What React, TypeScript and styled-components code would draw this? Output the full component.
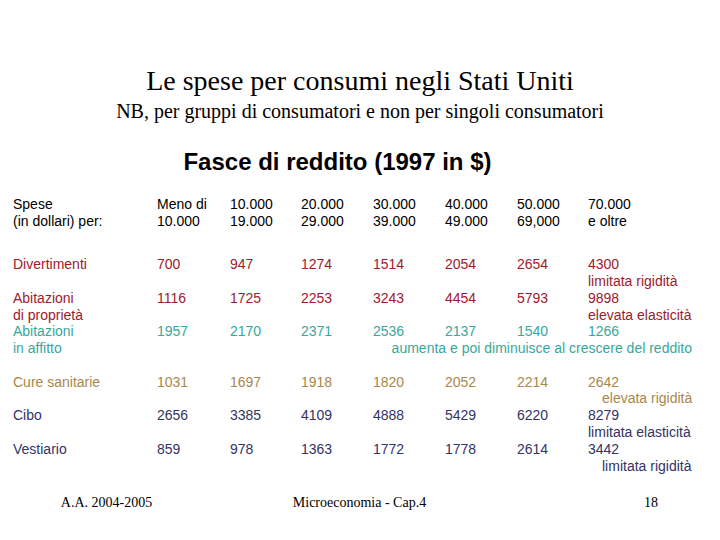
import React from "react";
import styled, { createGlobalStyle } from "styled-components";

const Global = createGlobalStyle`
  html, body { margin: 0; padding: 0; background: #ffffff; }
  body { width: 720px; height: 540px; overflow: hidden; }
`;

const Page = styled.div`
  width: 720px;
  height: 540px;
  display: flex;
  flex-direction: column;
  background: #ffffff;
  color: #000000;
`;

const Title = styled.h1`
  margin: 65px 0 0 0;
  font-family: "Liberation Serif", "Times New Roman", serif;
  font-weight: normal;
  font-size: 28px;
  line-height: 31px;
  text-align: center;
`;

const Subtitle = styled.h2`
  margin: 3px 0 0 0;
  font-family: "Liberation Serif", "Times New Roman", serif;
  font-weight: normal;
  font-size: 20px;
  line-height: 24px;
  text-align: center;
`;

const Heading = styled.h3`
  margin: 25px 45px 0 0;
  font-family: "Liberation Sans", Arial, sans-serif;
  font-weight: bold;
  font-size: 24px;
  line-height: 28px;
  text-align: center;
`;

const Table = styled.div`
  margin-top: 20px;
  padding-left: 13px;
  display: flex;
  flex-direction: column;
  font-family: "Liberation Sans", Arial, sans-serif;
  font-size: 14px;
  line-height: 16.8px;
`;

const Row = styled.div<{ $color: string; $gap: number }>`
  display: grid;
  grid-template-columns: 144px 73px 71px 72px 72px 72px 71px 104px;
  grid-template-rows: repeat(2, 16.8px);
  margin-top: ${(p) => p.$gap}px;
  color: ${(p) => p.$color};
  white-space: nowrap;
`;

const Label = styled.div`
  grid-row: span 2;
`;

const Cell = styled.div``;

const Note = styled.div<{ $indent: number }>`
  grid-column: 8;
  padding-left: ${(p) => p.$indent}px;
`;

const WideNote = styled.div`
  grid-column: 4 / span 5;
  text-align: right;
`;

const Footer = styled.div`
  margin-top: 20px;
  display: grid;
  grid-template-columns: 213px 293px 1fr;
  font-family: "Liberation Serif", "Times New Roman", serif;
  font-size: 14px;
  line-height: 17px;
`;

const FootItem = styled.div<{ $align: string; $pad?: number }>`
  text-align: ${(p) => p.$align};
  padding-right: ${(p) => p.$pad ?? 0}px;
`;

const RED = "#9e1a2c";
const TEAL = "#37a89a";
const GOLD = "#a8874b";
const NAVY = "#333366";

type Rec = {
  label: string[];
  values: string[];
  color: string;
  gap: number;
  note?: string;
  indent?: number;
  wide?: boolean;
};

const header = [
  ["Meno di", "10.000"],
  ["10.000", "19.000"],
  ["20.000", "29.000"],
  ["30.000", "39.000"],
  ["40.000", "49.000"],
  ["50.000", "69,000"],
  ["70.000", "e oltre"],
];

const rows: Rec[] = [
  { label: ["Divertimenti"], values: ["700", "947", "1274", "1514", "2054", "2654", "4300"], color: RED, gap: 26.7, note: "limitata rigidità", indent: 0 },
  { label: ["Abitazioni", "di proprietà"], values: ["1116", "1725", "2253", "3243", "4454", "5793", "9898"], color: RED, gap: 0, note: "elevata elasticità", indent: 0 },
  { label: ["Abitazioni", "in affitto"], values: ["1957", "2170", "2371", "2536", "2137", "1540", "1266"], color: TEAL, gap: 0, note: "aumenta e poi diminuisce al crescere del reddito", wide: true },
  { label: ["Cure sanitarie"], values: ["1031", "1697", "1918", "1820", "2052", "2214", "2642"], color: GOLD, gap: 16.6, note: "elevata rigidità", indent: 14 },
  { label: ["Cibo"], values: ["2656", "3385", "4109", "4888", "5429", "6220", "8279"], color: NAVY, gap: 0, note: "limitata elasticità", indent: 0 },
  { label: ["Vestiario"], values: ["859", "978", "1363", "1772", "1778", "2614", "3442"], color: NAVY, gap: 0, note: "limitata rigidità", indent: 14 },
];

export default function App() {
  return (
    <Page>
      <Global />
      <Title>Le spese per consumi negli Stati Uniti</Title>
      <Subtitle>NB, per gruppi di consumatori e non per singoli consumatori</Subtitle>
      <Heading>Fasce di reddito (1997 in $)</Heading>
      <Table>
        <Row $color="#000000" $gap={0}>
          <Label>
            Spese
            <br />
            (in dollari) per:
          </Label>
          {header.map((h, i) => (
            <Label key={i}>
              {h[0]}
              <br />
              {h[1]}
            </Label>
          ))}
        </Row>
        {rows.map((r, i) => (
          <Row key={i} $color={r.color} $gap={r.gap}>
            <Label>
              {r.label.map((l, j) => (
                <React.Fragment key={j}>
                  {j > 0 && <br />}
                  {l}
                </React.Fragment>
              ))}
            </Label>
            {r.values.map((v, j) => (
              <Cell key={j}>{v}</Cell>
            ))}
            {r.note &&
              (r.wide ? (
                <WideNote>{r.note}</WideNote>
              ) : (
                <Note $indent={r.indent ?? 0}>{r.note}</Note>
              ))}
          </Row>
        ))}
      </Table>
      <Footer>
        <FootItem $align="center">A.A. 2004-2005</FootItem>
        <FootItem $align="center">Microeconomia - Cap.4</FootItem>
        <FootItem $align="right" $pad={62}>18</FootItem>
      </Footer>
    </Page>
  );
}
